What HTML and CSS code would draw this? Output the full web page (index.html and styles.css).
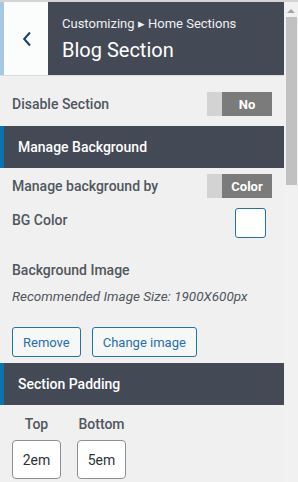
FILE: index.html
```html
<!DOCTYPE html>
<html>
    <head>
        <meta charset="utf-8" />
        <title>Blog Section</title>
        <meta name="viewport" content="width=device-width, initial-scale=1" />
        <link rel="stylesheet" href="styles.css">
    </head>

    <body>
        <div class="frame">
            <div class="panel">
                <div class="panel-head">
                    <button class="back">
                        <svg width="10" height="16" viewBox="0 0 10 16">
                            <polyline points="8,1.5 2.2,8 8,14.5" fill="none" stroke="#1d3e5e" stroke-width="2" />
                        </svg>
                    </button>
                    <div class="title-box">
                        <div class="crumb">Customizing ▸ Home Sections</div>
                        <div class="title">Blog Section</div>
                    </div>
                </div>

                <div class="row row-first">
                    <span class="label">Disable Section</span>
                    <div class="toggle"><span class="knob"></span><span class="state">No</span></div>
                </div>

                <div class="section-head head-bg">Manage Background</div>

                <div class="row row-by">
                    <span class="label">Manage background by</span>
                    <div class="toggle"><span class="knob"></span><span class="state">Color</span></div>
                </div>

                <div class="row row-color">
                    <span class="label">BG Color</span>
                    <span class="swatch"></span>
                </div>

                <div class="field-image">
                    <div class="label">Background Image</div>
                    <div class="hint">Recommended Image Size: 1900X600px</div>
                    <div class="buttons">
                        <button class="btn btn-remove">Remove</button>
                        <button class="btn btn-change">Change image</button>
                    </div>
                </div>

                <div class="section-head head-pad">Section Padding</div>

                <div class="padding-fields">
                    <div class="pad-field">
                        <span class="label">Top</span>
                        <input type="text" value="2em" />
                    </div>
                    <div class="pad-field">
                        <span class="label">Bottom</span>
                        <input type="text" value="5em" />
                    </div>
                </div>
            </div>

            <div class="scrollbar">
                <span class="arrow"></span>
                <span class="thumb"></span>
            </div>
        </div>
    </body>
</html>
```

FILE: styles.css
```css
html,
body {
    margin: 0;
    padding: 0;
    --dark: #434a56;
    --blue: #0a73b0;
    --label: #50575e;
    background: #f0f0f0;
    font-family: 'Roboto', sans-serif;
    height: 482px;
    overflow: hidden;
}

.frame {
    display: flex;
    height: 482px;
    border-top: 2px solid #d4d4d4;
    box-sizing: border-box;
}

.panel {
    width: 284px;
    flex: none;
}

.panel-head {
    display: flex;
    height: 73px;
    border-bottom: 1px solid #dcdcdc;
}

.back {
    width: 48px;
    border: 0;
    border-left: 4px solid #a7c7e2;
    background: #fbfdfd;
    padding: 0 0 0 2px;
    display: flex;
    align-items: center;
    justify-content: center;
}

.title-box {
    flex: 1;
    background: var(--dark);
    color: #fff;
    padding: 13px 0 0 14px;
}

.crumb {
    font-size: 13px;
    line-height: 18px;
    color: #eef0f2;
}

.title {
    font-size: 20px;
    line-height: 26px;
    margin-top: 4px;
}

.row {
    display: flex;
    justify-content: space-between;
    align-items: center;
    padding: 0 12px;
}

.row-first {
    margin-top: 16px;
}

.label {
    font-size: 14px;
    font-weight: 500;
    color: var(--label);
    line-height: 18px;
}

.toggle {
    display: flex;
    height: 24px;
    width: 65px;
}

.knob {
    width: 15px;
    background: #d3d3d3;
}

.state {
    flex: 1;
    background: #7b7b7b;
    color: #fff;
    font-size: 13px;
    font-weight: 700;
    display: flex;
    align-items: center;
    justify-content: center;
}

.section-head {
    background: var(--dark);
    border-left: 4px solid var(--blue);
    color: #fff;
    font-size: 14px;
    font-weight: 500;
    height: 42px;
    line-height: 42px;
    padding-left: 14px;
}

.head-bg {
    margin-top: 10px;
}

.row-by {
    margin-top: 6px;
}

.row-color {
    margin-top: 10px;
    align-items: flex-start;
    padding-right: 18px;
}

.row-color .label {
    padding-top: 3px;
}

.swatch {
    width: 29px;
    height: 28px;
    border: 1px solid #2271b1;
    border-radius: 3px;
    background: #fff;
}

.field-image {
    padding: 23px 12px 0;
}

.hint {
    font-size: 13.5px;
    font-style: italic;
    color: #50575e;
    line-height: 18px;
    margin-top: 8px;
}

.buttons {
    display: flex;
    gap: 11px;
    margin-top: 22px;
}

.btn {
    font-family: 'Roboto', sans-serif;
    font-size: 13px;
    color: #2271b1;
    background: #f6f7f7;
    border: 1px solid #2271b1;
    border-radius: 3px;
    height: 30px;
    padding: 0 10px;
}

.head-pad {
    margin-top: 6px;
}

.padding-fields {
    display: flex;
    gap: 16px;
    padding: 10px 12px 0;
}

.pad-field {
    display: flex;
    flex-direction: column;
    align-items: center;
    gap: 7px;
}

.pad-field input {
    width: 49px;
    height: 39px;
    box-sizing: border-box;
    border: 1px solid #8c8f94;
    border-radius: 4px;
    background: #fff;
    font-family: 'Roboto', sans-serif;
    font-size: 14px;
    color: #2c3338;
    text-align: center;
    padding: 0;
}

.scrollbar {
    flex: 1;
    background: #f1f1f1;
    position: relative;
}

.arrow {
    position: absolute;
    left: 3px;
    top: 7px;
    border: 4px solid transparent;
    border-bottom: 4px solid #a3a3a3;
    border-top: 0;
}

.thumb {
    position: absolute;
    left: 2px;
    right: 1px;
    top: 15px;
    height: 168px;
    background: #c1c1c1;
}
```
